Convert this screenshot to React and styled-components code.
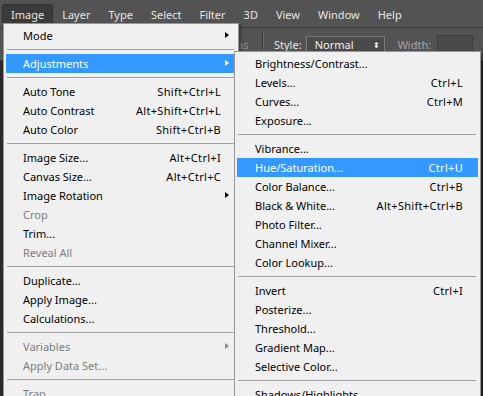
import React from "react";
import styled, { createGlobalStyle } from "styled-components";

const Global = createGlobalStyle`
  html, body { margin: 0; padding: 0; background: #282828; }
  body { font-family: "Noto Sans", "Segoe UI", "Liberation Sans", sans-serif; }
`;

const Screen = styled.div`
  position: relative;
  width: 483px;
  height: 396px;
  overflow: hidden;
  background: #282828;
  display: flex;
  flex-direction: column;
`;

const MenuBar = styled.div`
  height: 28px;
  box-sizing: border-box;
  padding: 4px 0 0 2px;
  background: #535353;
  border-bottom: 1px solid #3a3a3a;
  display: flex;
  align-items: flex-start;
`;

const BarItem = styled.div`
  height: 19px;
  box-sizing: border-box;
  padding: 0 ${(p) => p.$pad}px;
  display: flex;
  align-items: center;
  font-size: 11px;
  color: #e4e4e4;
  background: ${(p) => (p.$open ? "#3b3b3b" : "transparent")};
  border: 1px solid ${(p) => (p.$open ? "#303030" : "transparent")};
  border-bottom: none;
  border-radius: 3px 3px 0 0;
`;

const OptionsBar = styled.div`
  height: 32px;
  background: #535353;
  display: flex;
  align-items: center;
  font-size: 11px;
  color: #e0e0e0;
  padding-left: 237px;
  border-bottom: 1px solid #3a3a3a;
`;

const FadedLabel = styled.span`
  color: #8c8c8c;
  width: 25px;
`;

const VDivider = styled.div`
  width: 1px;
  height: 24px;
  background: #3a3a3a;
  border-right: 1px solid #666;
  margin-right: 10px;
`;

const OptLabel = styled.span`
  color: ${(p) => (p.$dim ? "#a8a8a8" : "#e8e8e8")};
  margin-right: ${(p) => p.$mr}px;
`;

const SelectBox = styled.div`
  width: 79px;
  height: 16px;
  box-sizing: border-box;
  border: 1px solid #7a7a7a;
  background: #4a4a4a;
  color: #f0f0f0;
  display: flex;
  align-items: center;
  justify-content: space-between;
  padding: 0 4px 0 8px;
  margin-right: 13px;
  font-size: 11px;
`;

const SpinGlyph = styled.span`
  font-size: 8px;
`;

const InputBox = styled.div`
  width: 36px;
  height: 18px;
  box-sizing: border-box;
  background: #4a4a4a;
  border: 1px solid #3e3e3e;
`;

const Workspace = styled.div`
  flex: 1;
  display: flex;
`;

const ToolStrip = styled.div`
  width: 36px;
  background: #2a2a2a;
`;

const Menu = styled.div`
  position: absolute;
  left: ${(p) => p.$x}px;
  top: ${(p) => p.$y}px;
  width: ${(p) => p.$w}px;
  box-sizing: border-box;
  background: #f0f0f0;
  border: 1px solid #979797;
  padding: 2px;
  box-shadow: 2px 2px 2px rgba(0, 0, 0, 0.35);
  display: flex;
  flex-direction: column;
`;

const Row = styled.div`
  height: 19px;
  display: flex;
  align-items: center;
  padding: 0 15px 0 ${(p) => p.$indent}px;
  font-size: 11px;
  color: ${(p) => (p.$active ? "#ffffff" : p.$disabled ? "#7d7d7d" : "#000000")};
  background: ${(p) => (p.$active ? "#3399ff" : "transparent")};
  position: relative;
  white-space: nowrap;
`;

const Label = styled.span`
  flex: 1;
`;

const Shortcut = styled.span`
  letter-spacing: 0.3px;
`;

const Arrow = styled.span`
  position: absolute;
  right: 7px;
  top: 6px;
  width: 0;
  height: 0;
  border-top: 3.5px solid transparent;
  border-bottom: 3.5px solid transparent;
  border-left: 4px solid
    ${(p) => (p.$active ? "#ffffff" : p.$disabled ? "#8a8a8a" : "#000000")};
`;

const Sep = styled.div`
  height: 9px;
  display: flex;
  align-items: center;
  padding: 0 2px 0 1px;
  &::after {
    content: "";
    flex: 1;
    height: 1px;
    background: #a0a0a0;
  }
`;

const barItems = [
  ["Image", 8, true],
  ["Layer", 8],
  ["Type", 8],
  ["Select", 8],
  ["Filter", 8],
  ["3D", 8],
  ["View", 8],
  ["Window", 8],
  ["Help", 8],
];

const mainMenu = [
  { l: "Mode", sub: true },
  "-",
  { l: "Adjustments", sub: true, active: true },
  "-",
  { l: "Auto Tone", k: "Shift+Ctrl+L" },
  { l: "Auto Contrast", k: "Alt+Shift+Ctrl+L" },
  { l: "Auto Color", k: "Shift+Ctrl+B" },
  "-",
  { l: "Image Size...", k: "Alt+Ctrl+I" },
  { l: "Canvas Size...", k: "Alt+Ctrl+C" },
  { l: "Image Rotation", sub: true },
  { l: "Crop", dis: true },
  { l: "Trim..." },
  { l: "Reveal All", dis: true },
  "-",
  { l: "Duplicate..." },
  { l: "Apply Image..." },
  { l: "Calculations..." },
  "-",
  { l: "Variables", sub: true, dis: true },
  { l: "Apply Data Set...", dis: true },
  "-",
  { l: "Trap", dis: true },
];

const subMenu = [
  { l: "Brightness/Contrast..." },
  { l: "Levels...", k: "Ctrl+L" },
  { l: "Curves...", k: "Ctrl+M" },
  { l: "Exposure..." },
  "-",
  { l: "Vibrance..." },
  { l: "Hue/Saturation...", k: "Ctrl+U", active: true },
  { l: "Color Balance...", k: "Ctrl+B" },
  { l: "Black & White...", k: "Alt+Shift+Ctrl+B" },
  { l: "Photo Filter..." },
  { l: "Channel Mixer..." },
  { l: "Color Lookup..." },
  "-",
  { l: "Invert", k: "Ctrl+I" },
  { l: "Posterize..." },
  { l: "Threshold..." },
  { l: "Gradient Map..." },
  { l: "Selective Color..." },
  "-",
  { l: "Shadows/Highlights..." },
];

function MenuItems({ items, indent }) {
  return items.map((it, i) =>
    it === "-" ? (
      <Sep key={i} />
    ) : (
      <Row key={i} $indent={indent} $active={it.active} $disabled={it.dis}>
        <Label>{it.l}</Label>
        {it.k && <Shortcut>{it.k}</Shortcut>}
        {it.sub && <Arrow $active={it.active} $disabled={it.dis} />}
      </Row>
    )
  );
}

export default function App() {
  return (
    <>
      <Global />
      <Screen>
        <MenuBar>
          {barItems.map(([t, pad, open]) => (
            <BarItem key={t} $pad={pad} $open={open}>
              {t}
            </BarItem>
          ))}
        </MenuBar>
        <OptionsBar>
          <FadedLabel>as</FadedLabel>
          <VDivider />
          <OptLabel $mr={4}>Style:</OptLabel>
          <SelectBox>
            <span>Normal</span>
            <SpinGlyph>⬍</SpinGlyph>
          </SelectBox>
          <OptLabel $dim $mr={6}>
            Width:
          </OptLabel>
          <InputBox />
        </OptionsBar>
        <Workspace>
          <ToolStrip />
        </Workspace>
        <Menu $x={3} $y={23} $w={236}>
          <MenuItems items={mainMenu} indent={17} />
        </Menu>
        <Menu $x={234} $y={51} $w={247}>
          <MenuItems items={subMenu} indent={18} />
        </Menu>
      </Screen>
    </>
  );
}
